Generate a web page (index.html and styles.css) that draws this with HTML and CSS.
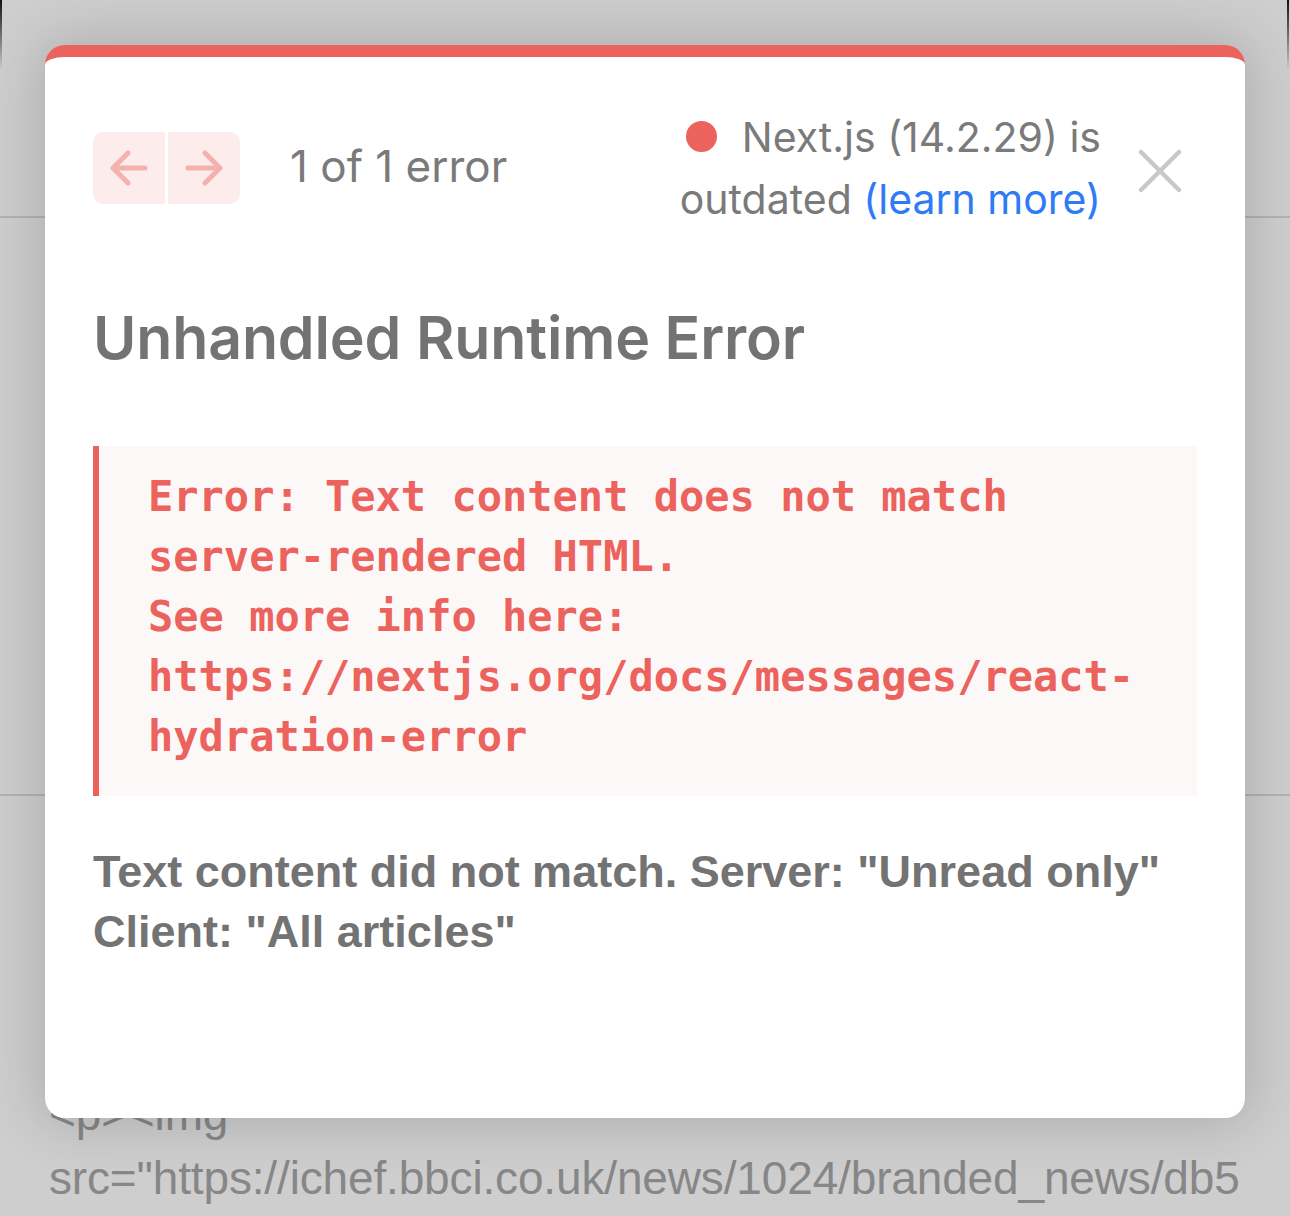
FILE: index.html
```html
<!DOCTYPE html>
<html>
<head>
<meta charset="utf-8">
<link rel="stylesheet" href="styles.css">
</head>
<body>
<div class="page">
  <div class="band band-top"></div>
  <div class="band band-mid"></div>
  <div class="bg-text">
    <div class="bg-line">&lt;p&gt;&lt;img</div>
    <div class="bg-line">src="https://ichef.bbci.co.uk/news/1024/branded_news/db5</div>
  </div>
</div>
<div class="frame-edge frame-left"></div>
<div class="frame-edge frame-right"></div>

<div class="dialog">
  <div class="header">
    <div class="nav">
      <button class="nav-btn nav-prev" aria-label="previous">
        <svg width="38" height="38" viewBox="0 0 38 38"><path d="M35 19H3M18 4L3 19l15 15" fill="none" stroke="#f4b2ae" stroke-width="5" stroke-linecap="round" stroke-linejoin="round"/></svg>
      </button>
      <button class="nav-btn nav-next" aria-label="next">
        <svg width="38" height="38" viewBox="0 0 38 38"><path d="M3 19h32M20 4l15 15-15 15" fill="none" stroke="#f4b2ae" stroke-width="5" stroke-linecap="round" stroke-linejoin="round"/></svg>
      </button>
    </div>
    <div class="count">1 of 1 error</div>
    <div class="badge"><span class="dot"></span>Next.js (14.2.29) is<br>outdated <a class="learn">(learn more)</a></div>
    <button class="close" aria-label="close">
      <svg width="44" height="44" viewBox="0 0 44 44"><path d="M3 3l38 38M41 3L3 41" stroke="#c8c8c8" stroke-width="4.5" stroke-linecap="round"/></svg>
    </button>
  </div>
  <h1 class="title">Unhandled Runtime Error</h1>
  <div class="code">Error: Text content does not match<br>server-rendered HTML.<br>See more info here:<br>https://nextjs.org/docs/messages/react-<br>hydration-error</div>
  <p class="desc">Text content did not match. Server: "Unread only"<br>Client: "All articles"</p>
</div>
</body>
</html>
```
FILE: styles.css
```css
html, body {
  margin: 0;
  padding: 0;
}
body {
  width: 1290px;
  height: 1216px;
  overflow: hidden;
  background: #cecece;
  position: relative;
  font-family: Inter, "Noto Sans", sans-serif;
}
.page {
  display: flex;
  flex-direction: column;
}
.band {
  border-bottom: 2px solid #b3b3b3;
}
.band-top {
  height: 216px;
}
.band-mid {
  height: 576px;
}
.bg-text {
  padding: 286px 0 0 49px;
  font-family: "Liberation Sans", sans-serif;
  font-size: 46px;
  line-height: 64px;
  color: #878787;
  white-space: nowrap;
  letter-spacing: -0.15px;
}
.frame-edge {
  position: absolute;
  top: 0;
  width: 2px;
  height: 70px;
  background: linear-gradient(#111, rgba(0,0,0,0));
}
.frame-left { left: 0; }
.frame-right { right: 1px; }

.dialog {
  position: absolute;
  left: 45px;
  top: 45px;
  width: 1200px;
  height: 1073px;
  box-sizing: border-box;
  background: #fff;
  border-top: 12px solid #ec625d;
  border-radius: 20px;
  padding: 75px 48px 0 48px;
  box-shadow: 0 0 55px 6px rgba(0,0,0,0.16);
}
.header {
  display: flex;
  align-items: center;
  height: 72px;
}
.nav {
  display: flex;
  gap: 3px;
}
.nav-btn {
  width: 72px;
  height: 72px;
  border: 0;
  padding: 0;
  background: #fcecec;
  display: flex;
  align-items: center;
  justify-content: center;
}
.nav-prev { border-radius: 10px 0 0 10px; }
.nav-next { border-radius: 0 10px 10px 0; }
.count {
  margin-left: 50px;
  margin-top: -4px;
  font-size: 44px;
  color: #7a7a7a;
  flex: 1;
}
.badge {
  text-align: right;
  font-size: 41px;
  line-height: 62px;
  color: #7a7a7a;
}
.dot {
  display: inline-block;
  width: 31px;
  height: 31px;
  border-radius: 50%;
  background: #ec625d;
  margin-right: 25px;
  vertical-align: 0px;
}
.learn {
  color: #2f7bf5;
}
.close {
  margin-left: 37px;
  margin-right: 15px;
  margin-top: 6px;
  border: 0;
  padding: 0;
  background: none;
  width: 44px;
  height: 44px;
}
.title {
  margin: 99px 0 0 0;
  font-size: 59px;
  font-weight: 600;
  line-height: 70px;
  color: #737373;
  letter-spacing: -0.15px;
}
.code {
  margin-top: 73px;
  border-left: 6px solid #ec625d;
  background: #fcf8f8;
  padding: 21px 40px 29px 49px;
  font-family: "DejaVu Sans Mono", monospace;
  font-weight: bold;
  font-size: 42px;
  line-height: 60px;
  color: #ec625d;
}
.desc {
  margin: 46px 0 0 0;
  font-family: "Liberation Sans", sans-serif;
  font-weight: bold;
  font-size: 45px;
  line-height: 60px;
  color: #737373;
}
```
